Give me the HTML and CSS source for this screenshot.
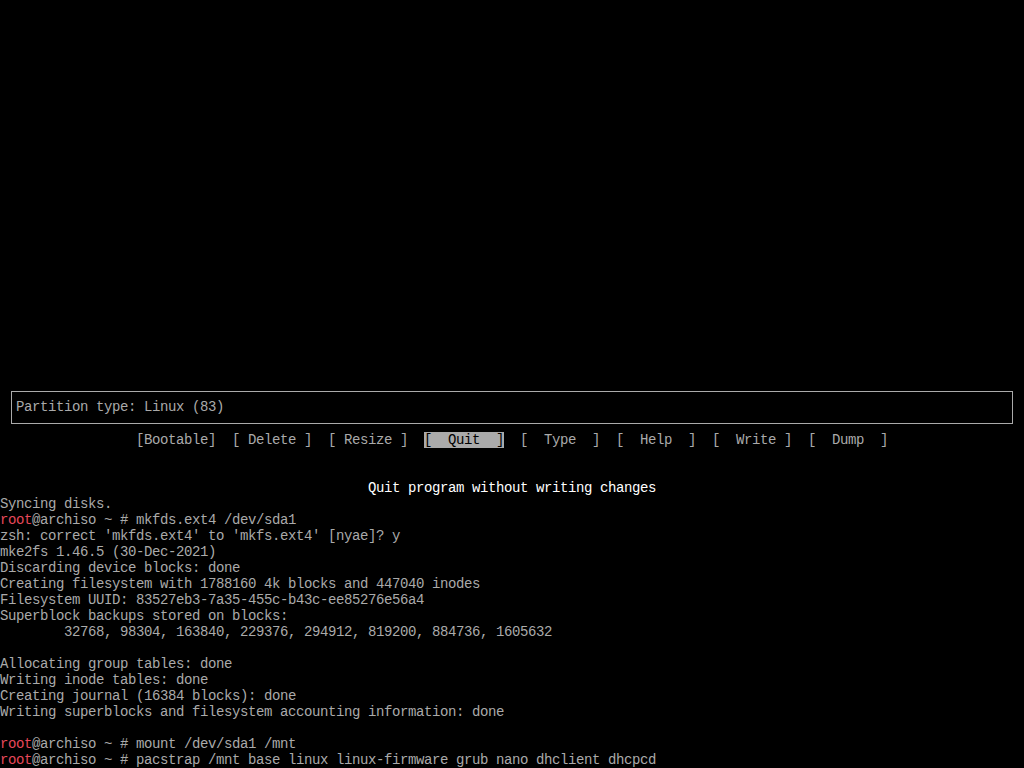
FILE: index.html
```html
<!DOCTYPE html>
<html lang="en">
<head>
    <meta charset="UTF-8">
    <meta name="viewport" content="width=device-width, initial-scale=1.0">
    <title>cfdisk - tty1</title>
    <link rel="stylesheet" href="styles.css">
</head>
<body>
    <div class="screen">
        <div class="info-row">
            <div class="info-box">Partition type: Linux (83)</div>
        </div>
        <div class="menu"><span>[Bootable]</span>  <span>[ Delete ]</span>  <span>[ Resize ]</span>  <span class="selected">[  Quit  ]</span>  <span>[  Type  ]</span>  <span>[  Help  ]</span>  <span>[  Write ]</span>  <span>[  Dump  ]</span></div>
        <div class="blank"></div>
        <div class="blank"></div>
        <div class="hint">Quit program without writing changes</div>
<pre class="log">Syncing disks.
<span class="user">root</span>@archiso ~ # mkfds.ext4 /dev/sda1
zsh: correct 'mkfds.ext4' to 'mkfs.ext4' [nyae]? y
mke2fs 1.46.5 (30-Dec-2021)
Discarding device blocks: done
Creating filesystem with 1788160 4k blocks and 447040 inodes
Filesystem UUID: 83527eb3-7a35-455c-b43c-ee85276e56a4
Superblock backups stored on blocks:
        32768, 98304, 163840, 229376, 294912, 819200, 884736, 1605632

Allocating group tables: done
Writing inode tables: done
Creating journal (16384 blocks): done
Writing superblocks and filesystem accounting information: done

<span class="user">root</span>@archiso ~ # mount /dev/sda1 /mnt
<span class="user">root</span>@archiso ~ # pacstrap /mnt base linux linux-firmware grub nano dhclient dhcpcd</pre>
    </div>
</body>
</html>
```

FILE: styles.css
```css
html, body {
    margin: 0;
    background: #000;
}
.screen {
    width: 1024px;
    height: 768px;
    display: flex;
    flex-direction: column;
    justify-content: flex-end;
    overflow: hidden;
    font-family: "Liberation Mono", "DejaVu Sans Mono", monospace;
    font-size: 14px;
    letter-spacing: -0.4px;
    line-height: 16px;
    color: #aaaaaa;
}
.info-row {
    flex: none;
    height: 48px;
    padding: 7px 11px 8px 11px;
    box-sizing: border-box;
}
.info-box {
    height: 33px;
    box-sizing: border-box;
    border: 1px solid #aaaaaa;
    padding: 7px 4px 0 4px;
    white-space: pre;
}
.menu {
    flex: none;
    height: 16px;
    text-align: center;
    white-space: pre;
}
.selected {
    background: #aaaaaa;
    color: #000;
}
.blank {
    flex: none;
    height: 16px;
}
.hint {
    flex: none;
    height: 16px;
    text-align: center;
    color: #ffffff;
    white-space: pre;
}
.log {
    flex: none;
    margin: 0;
    font: inherit;
    letter-spacing: inherit;
    white-space: pre;
}
.user {
    color: #e8485a;
}
```
